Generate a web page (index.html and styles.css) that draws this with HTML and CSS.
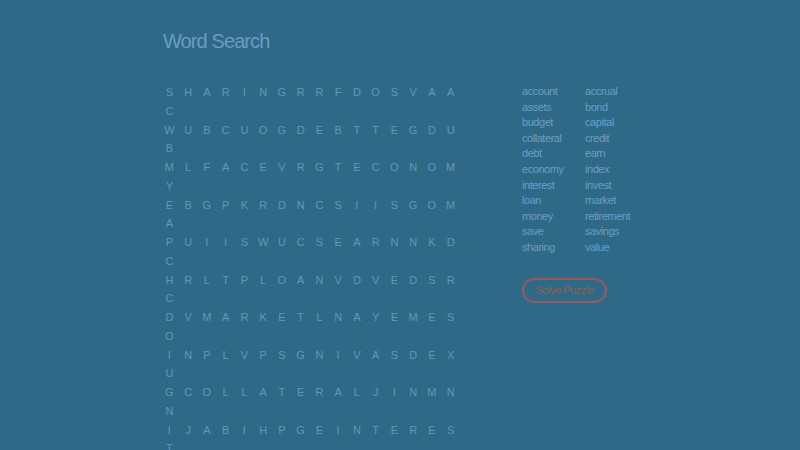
FILE: index.html
```html
<!DOCTYPE html>
<html lang="en">
<head>
<meta charset="utf-8">
<title>Word Search</title>
<link rel="stylesheet" href="styles.css">
</head>
<body>
<main class="page">
  <h1 class="title">Word Search</h1>
  <div class="board">
    <div class="grid">
      <div class="row"><span>S</span><span>H</span><span>A</span><span>R</span><span>I</span><span>N</span><span>G</span><span>R</span><span>R</span><span>F</span><span>D</span><span>O</span><span>S</span><span>V</span><span>A</span><span>A</span><span>C</span></div>
      <div class="row"><span>W</span><span>U</span><span>B</span><span>C</span><span>U</span><span>O</span><span>G</span><span>D</span><span>E</span><span>B</span><span>T</span><span>T</span><span>E</span><span>G</span><span>D</span><span>U</span><span>B</span></div>
      <div class="row"><span>M</span><span>L</span><span>F</span><span>A</span><span>C</span><span>E</span><span>V</span><span>R</span><span>G</span><span>T</span><span>E</span><span>C</span><span>O</span><span>N</span><span>O</span><span>M</span><span>Y</span></div>
      <div class="row"><span>E</span><span>B</span><span>G</span><span>P</span><span>K</span><span>R</span><span>D</span><span>N</span><span>C</span><span>S</span><span>I</span><span>I</span><span>S</span><span>G</span><span>O</span><span>M</span><span>A</span></div>
      <div class="row"><span>P</span><span>U</span><span>I</span><span>I</span><span>S</span><span>W</span><span>U</span><span>C</span><span>S</span><span>E</span><span>A</span><span>R</span><span>N</span><span>N</span><span>K</span><span>D</span><span>C</span></div>
      <div class="row"><span>H</span><span>R</span><span>L</span><span>T</span><span>P</span><span>L</span><span>O</span><span>A</span><span>N</span><span>V</span><span>D</span><span>V</span><span>E</span><span>D</span><span>S</span><span>R</span><span>C</span></div>
      <div class="row"><span>D</span><span>V</span><span>M</span><span>A</span><span>R</span><span>K</span><span>E</span><span>T</span><span>L</span><span>N</span><span>A</span><span>Y</span><span>E</span><span>M</span><span>E</span><span>S</span><span>O</span></div>
      <div class="row"><span>I</span><span>N</span><span>P</span><span>L</span><span>V</span><span>P</span><span>S</span><span>G</span><span>N</span><span>I</span><span>V</span><span>A</span><span>S</span><span>D</span><span>E</span><span>X</span><span>U</span></div>
      <div class="row"><span>G</span><span>C</span><span>O</span><span>L</span><span>L</span><span>A</span><span>T</span><span>E</span><span>R</span><span>A</span><span>L</span><span>J</span><span>I</span><span>N</span><span>M</span><span>N</span><span>N</span></div>
      <div class="row"><span>I</span><span>J</span><span>A</span><span>B</span><span>I</span><span>H</span><span>P</span><span>G</span><span>E</span><span>I</span><span>N</span><span>T</span><span>E</span><span>R</span><span>E</span><span>S</span><span>T</span></div>
      <div class="row"><span>R</span><span>E</span><span>T</span><span>I</span><span>R</span><span>E</span><span>M</span><span>E</span><span>N</span><span>T</span><span>O</span><span>B</span><span>O</span><span>N</span><span>D</span><span>W</span><span>Q</span></div>
      <div class="row"><span>A</span><span>S</span><span>S</span><span>E</span><span>T</span><span>S</span><span>K</span><span>F</span><span>C</span><span>R</span><span>E</span><span>D</span><span>I</span><span>T</span><span>Z</span><span>H</span><span>L</span></div>
      <div class="row"><span>C</span><span>A</span><span>P</span><span>I</span><span>T</span><span>A</span><span>L</span><span>Y</span><span>M</span><span>O</span><span>N</span><span>E</span><span>Y</span><span>B</span><span>X</span><span>E</span><span>F</span></div>
      <div class="row"><span>C</span><span>B</span><span>U</span><span>D</span><span>G</span><span>E</span><span>T</span><span>V</span><span>A</span><span>L</span><span>U</span><span>E</span><span>R</span><span>Q</span><span>W</span><span>A</span><span>J</span></div>
      <div class="row"><span>R</span><span>I</span><span>N</span><span>V</span><span>E</span><span>S</span><span>T</span><span>H</span><span>S</span><span>A</span><span>V</span><span>E</span><span>K</span><span>P</span><span>O</span><span>R</span><span>Z</span></div>
      <div class="row"><span>U</span><span>S</span><span>A</span><span>V</span><span>I</span><span>N</span><span>G</span><span>S</span><span>D</span><span>E</span><span>B</span><span>T</span><span>F</span><span>Y</span><span>L</span><span>N</span><span>X</span></div>
      <div class="row"><span>A</span><span>C</span><span>C</span><span>R</span><span>U</span><span>A</span><span>L</span><span>O</span><span>L</span><span>O</span><span>A</span><span>N</span><span>W</span><span>G</span><span>H</span><span>Q</span><span>M</span></div>
    </div>
    <aside class="side">
      <ul class="words">
        <li>account</li><li>accrual</li>
        <li>assets</li><li>bond</li>
        <li>budget</li><li>capital</li>
        <li>collateral</li><li>credit</li>
        <li>debt</li><li>earn</li>
        <li>economy</li><li>index</li>
        <li>interest</li><li>invest</li>
        <li>loan</li><li>market</li>
        <li>money</li><li>retirement</li>
        <li>save</li><li>savings</li>
        <li>sharing</li><li>value</li>
      </ul>
      <button class="solve" type="button">Solve Puzzle</button>
    </aside>
  </div>
</main>
</body>
</html>
```
FILE: styles.css
```css
html, body {
  margin: 0;
  padding: 0;
}

body {
  background: #2e6a88;
  font-family: "Liberation Sans", Arial, sans-serif;
  min-height: 450px;
}

.page {
  width: 480px;
  margin: 0 auto;
  padding-top: 30px;
}

.title {
  margin: 0 0 30px 3px;
  font-size: 20px;
  line-height: 23px;
  font-weight: normal;
  letter-spacing: -0.9px;
  color: #6a9cc2;
}

.board {
  display: flex;
  align-items: flex-start;
}

.grid {
  flex: none;
  width: 301px;
  font-size: 11px;
  color: #6396ba;
}

/* sixteen letter cells fit on a line; the seventeenth wraps */
.row {
  display: flex;
  flex-wrap: wrap;
}

.row span {
  width: 18.75px;
  height: 18.75px;
  line-height: 19.5px;
  text-align: center;
}

.side {
  flex: none;
  margin-left: 61px;
  padding-top: 1px;
}

.words {
  list-style: none;
  margin: 0;
  padding: 0;
  display: grid;
  grid-template-columns: 63px 63px;
  font-size: 11px;
  line-height: 15.6px;
  letter-spacing: -0.45px;
  color: #6b9dc2;
}

.solve {
  display: block;
  margin-top: 22px;
  width: 85px;
  height: 25px;
  padding: 0;
  border: 2px solid #9a5a57;
  border-radius: 13px;
  background: transparent;
  color: #9a5a50;
  font-family: "Liberation Sans", Arial, sans-serif;
  font-size: 11px;
  letter-spacing: -0.45px;
}
```
